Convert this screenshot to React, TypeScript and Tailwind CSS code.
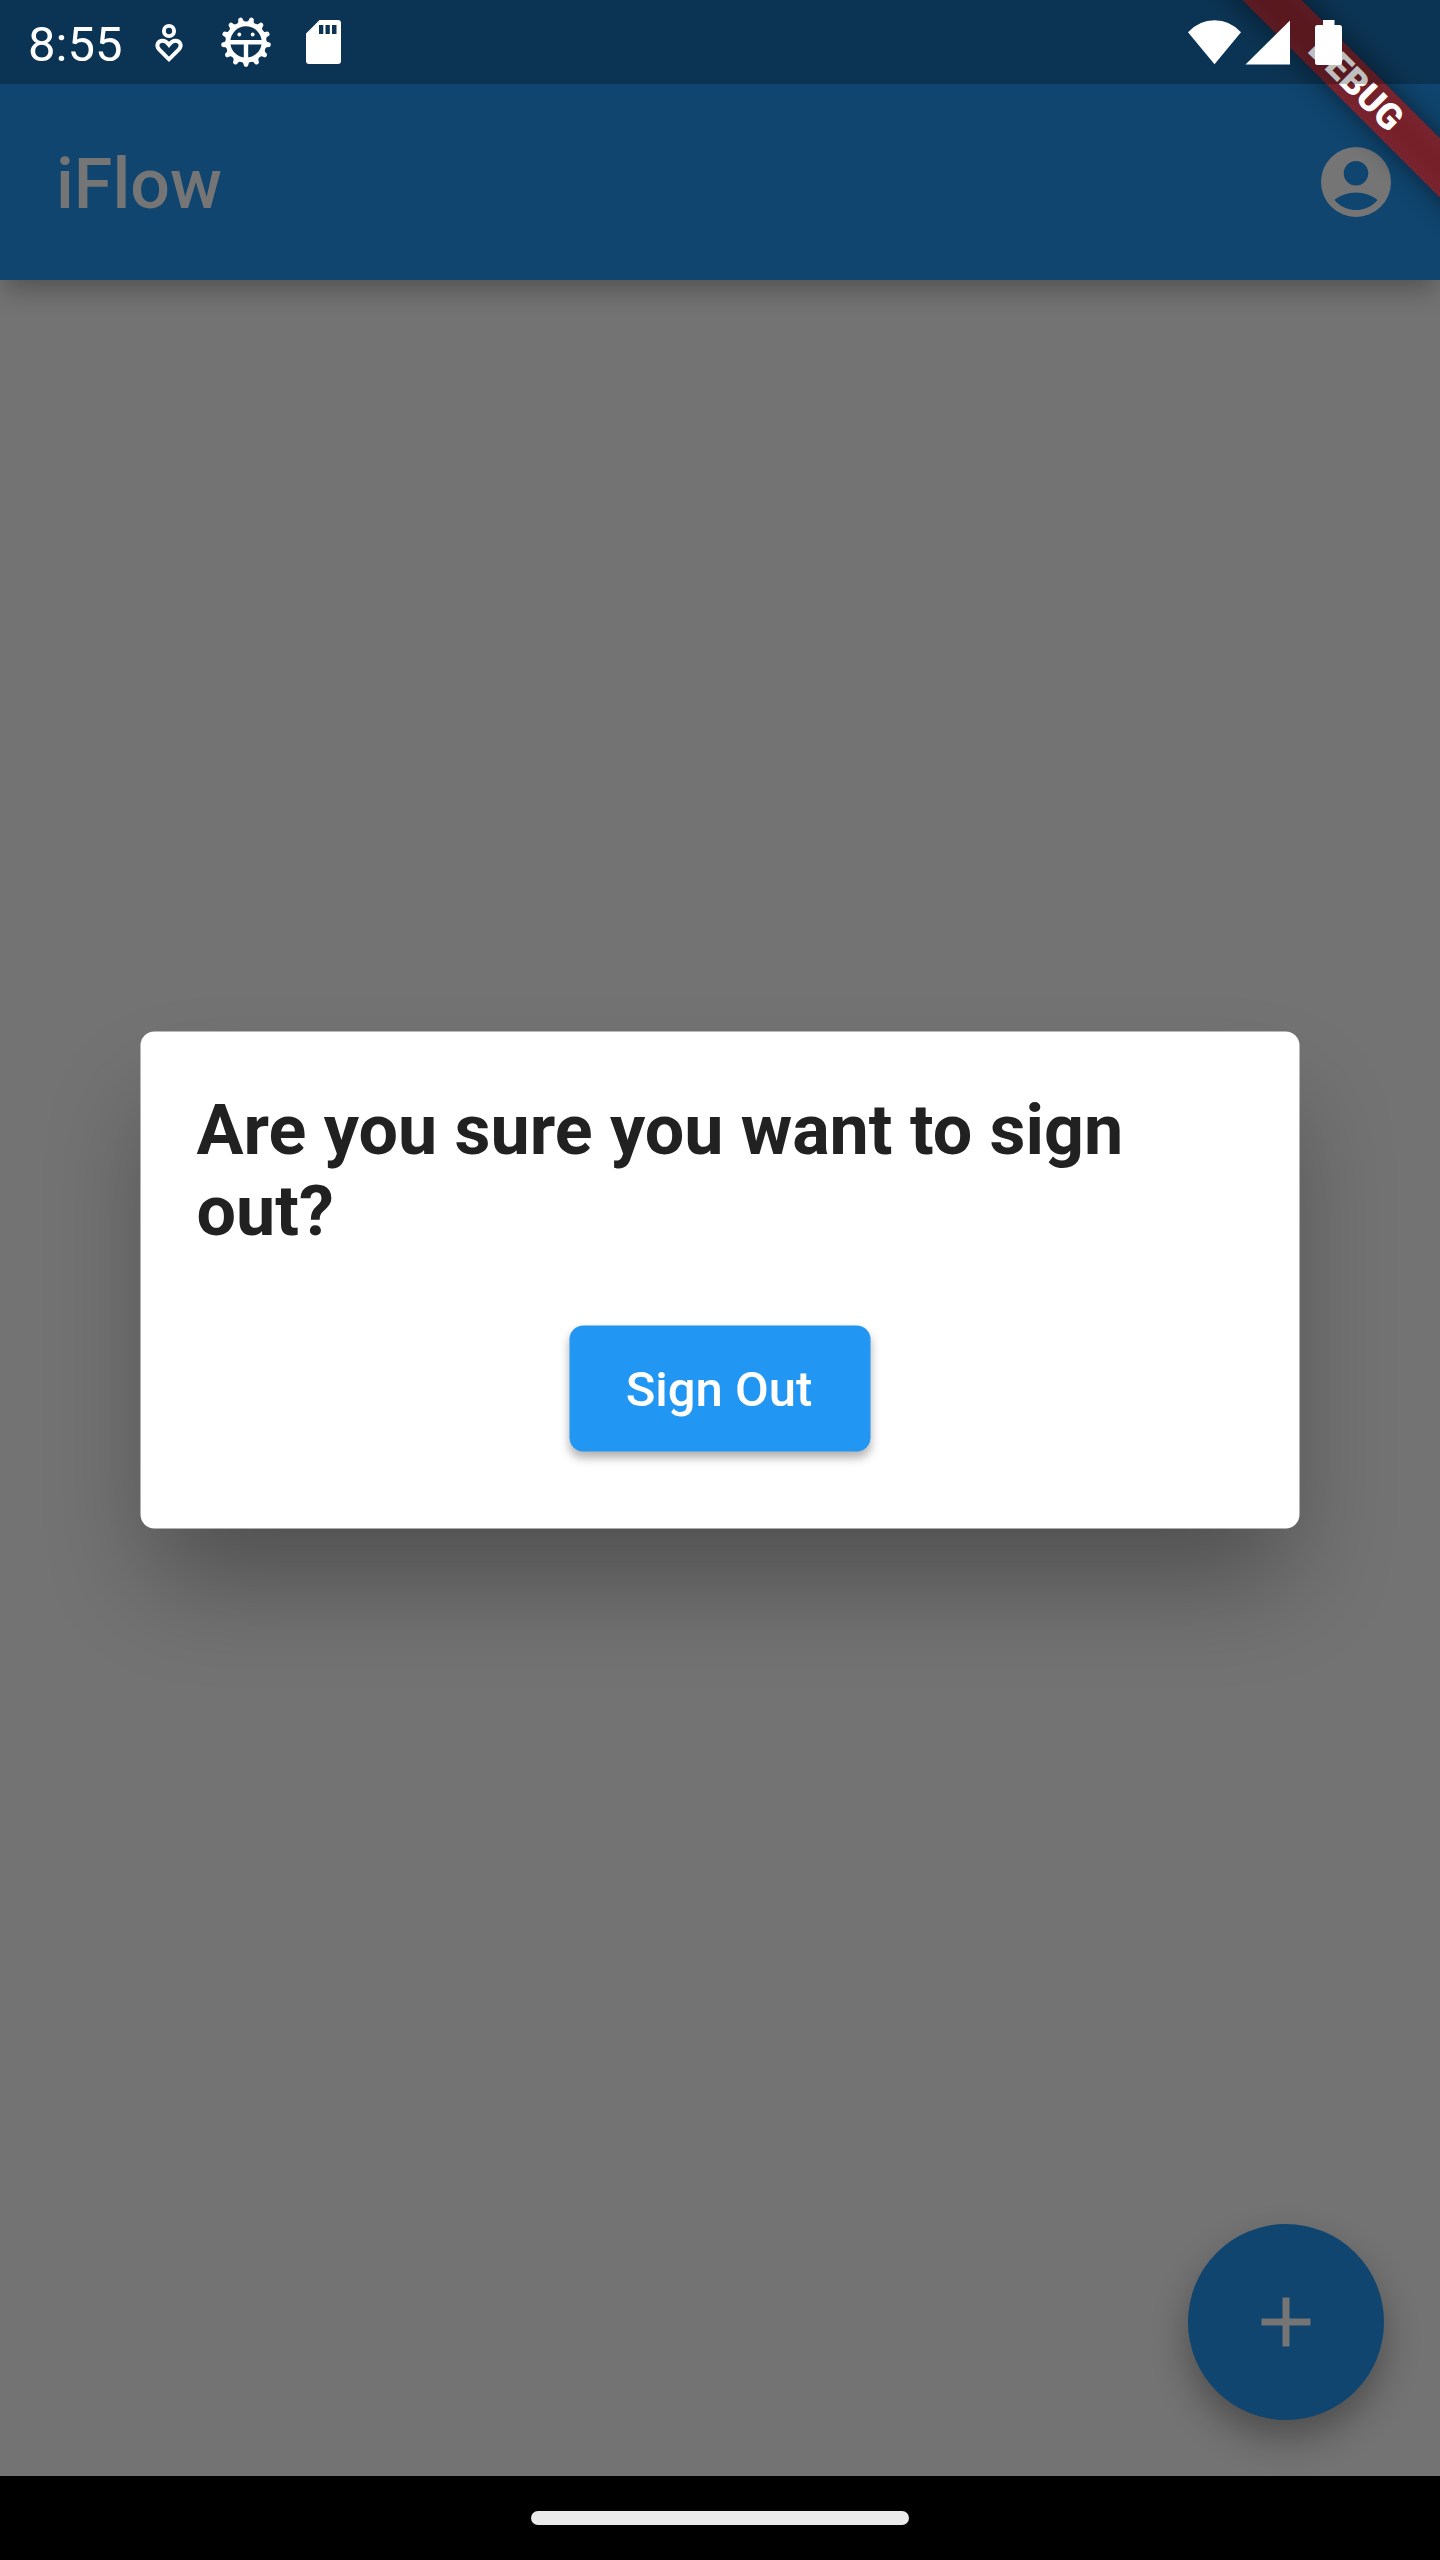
import React from "react";

const TOOTH_ANGLES = Array.from({ length: 13 }, (_, i) => 180 + (i * 360) / 13);

function HeartPersonIcon() {
  return (
    <svg className="ml-8 h-[42px] w-[30px]" viewBox="154.5 20 30 42" fill="none" stroke="white" strokeWidth="3.9">
      <circle cx="169.5" cy="30" r="5.1" />
      <path d="M169.5 58.3L159.6 48.4C156 44.5 158.5 39.8 163 39.8C166 39.8 167.8 41.5 169.5 43.8C171.2 41.5 173 39.8 176 39.8C180.5 39.8 183 44.5 179.4 48.4Z" />
    </svg>
  );
}

function GearBugIcon() {
  return (
    <svg className="ml-9 h-[52px] w-[52px]" viewBox="-26 -26 52 52">
      {TOOTH_ANGLES.map((a) => (
        <path
          key={a}
          d="M-5.2 -19C-3.4 -20 -2.6 -21 -2.4 -22.6A2.4 2.4 0 0 1 2.4 -22.6C2.6 -21 3.4 -20 5.2 -19Z"
          fill="white"
          transform={`rotate(${a})`}
        />
      ))}
      <circle r="18.1" fill="none" stroke="white" strokeWidth="4.8" />
      <path d="M-17 0H17M0 0V17" stroke="white" strokeWidth="4.4" transform="translate(0 .2)" />
      <circle cx="-6.7" cy="-7.5" r="1.9" fill="white" />
      <circle cx="6.7" cy="-7.5" r="1.9" fill="white" />
    </svg>
  );
}

function SdCardIcon() {
  return (
    <svg className="ml-[34px] h-[44px] w-[35px]" viewBox="0 0 35 44">
      <path
        fillRule="evenodd"
        fill="white"
        d="M13.5 0H32Q35 0 35 3V41Q35 44 32 44H3Q0 44 0 41V13.5ZM13 5V14H17.3V5ZM19.5 5V14H23.8V5ZM26 5V14H30.5V5Z"
      />
    </svg>
  );
}

function StatusBar() {
  return (
    <div className="absolute inset-x-0 top-0 z-20 flex h-[84px] items-center bg-black/25 pl-7">
      <span className="pt-[5px] text-[49px] leading-[78px] text-white">8:55</span>
      <HeartPersonIcon />
      <GearBugIcon />
      <SdCardIcon />
      <svg className="mr-[98px] ml-auto h-[45px] w-[154px]" viewBox="1188 19 154 45" fill="white">
        <path d="M1214.5 63.3L1188 31.2Q1199 19.2 1214.5 19.2Q1230 19.2 1241 31.2Z" />
        <path d="M1245.5 63.6H1290V19.5Z" />
        <path d="M1323 19H1334.5V24H1339.5Q1342 24 1342 26.5V61.5Q1342 64 1339.5 64H1317.5Q1315 64 1315 61.5V26.5Q1315 24 1317.5 24H1323Z" />
      </svg>
    </div>
  );
}

function DebugBanner() {
  return (
    <div className="pointer-events-none absolute top-0 right-0 z-10 h-[320px] w-[320px] overflow-hidden">
      <div className="absolute top-[63px] -right-[196px] h-[42px] w-[560px] rotate-45 bg-black/50 blur-[14px]" />
      <div className="absolute top-[63px] -right-[196px] flex h-[42px] w-[560px] rotate-45 items-center justify-center bg-[#b71c1c]/63 text-[36.2px] leading-[42px] font-black text-white">
        DEBUG
      </div>
    </div>
  );
}

export default function App() {
  return (
    <div className="relative flex h-[2560px] w-[1440px] flex-col overflow-hidden bg-[#737373] font-[Roboto,sans-serif]">
      <StatusBar />
      <DebugBanner />

      <header className="flex h-[280px] items-center justify-between bg-[#0f456f] pt-[84px] pr-[42px] pl-14 text-[#757575] shadow-[0_13px_25px_-4px_rgba(0,0,0,0.29)]">
        <h1 className="pt-[3px] text-[70px] leading-[82px] font-medium">iFlow</h1>
        <svg className="size-[84px]" viewBox="0 0 24 24" fill="currentColor">
          <path
            fillRule="evenodd"
            d="M12 2a10 10 0 1 0 0 20 10 10 0 0 0 0-20ZM12 6a3.5 3.5 0 1 1 0 7 3.5 3.5 0 0 1 0-7ZM12 15c-2.32 0-4.45.8-6.14 2.12C7.33 18.88 9.53 20 12 20s4.67-1.12 6.14-2.88C16.45 15.8 14.32 15 12 15Z"
          />
        </svg>
      </header>

      <main className="flex flex-1 flex-col">
        <section className="mt-[751px] ml-[141px] flex h-[497px] w-[1159px] translate-x-[-0.5px] translate-y-[0.5px] flex-col items-center rounded-[14px] bg-white px-14 pt-[58px] shadow-[0_62px_104px_-12px_rgba(0,0,0,0.31)]">
          <h2 className="w-full text-[70px] leading-[81px] font-bold text-[#212121]">
            Are you sure you want to sign out?
          </h2>
          <button className="mt-[74px] h-[126px] w-[301px] rounded-[14px] bg-[#2196f3] pr-[2px] text-[49px] leading-[57px] font-medium text-white shadow-[0_6px_10px_rgba(0,0,0,0.3)]">
            Sign Out
          </button>
        </section>
        <button className="mt-auto mr-14 mb-14 flex size-[196px] items-center justify-center self-end rounded-full bg-[#0f456f] text-[#757575] shadow-[0_18px_36px_rgba(0,0,0,0.32)]">
          <svg className="size-[84px]" viewBox="0 0 24 24" fill="currentColor">
            <path d="M19 13h-6v6h-2v-6H5v-2h6V5h2v6h6z" />
          </svg>
        </button>
      </main>

      <footer className="z-10 flex h-[84px] items-center justify-center bg-black">
        <div className="h-[14px] w-[378px] rounded-full bg-[#ebebeb]" />
      </footer>
    </div>
  );
}
